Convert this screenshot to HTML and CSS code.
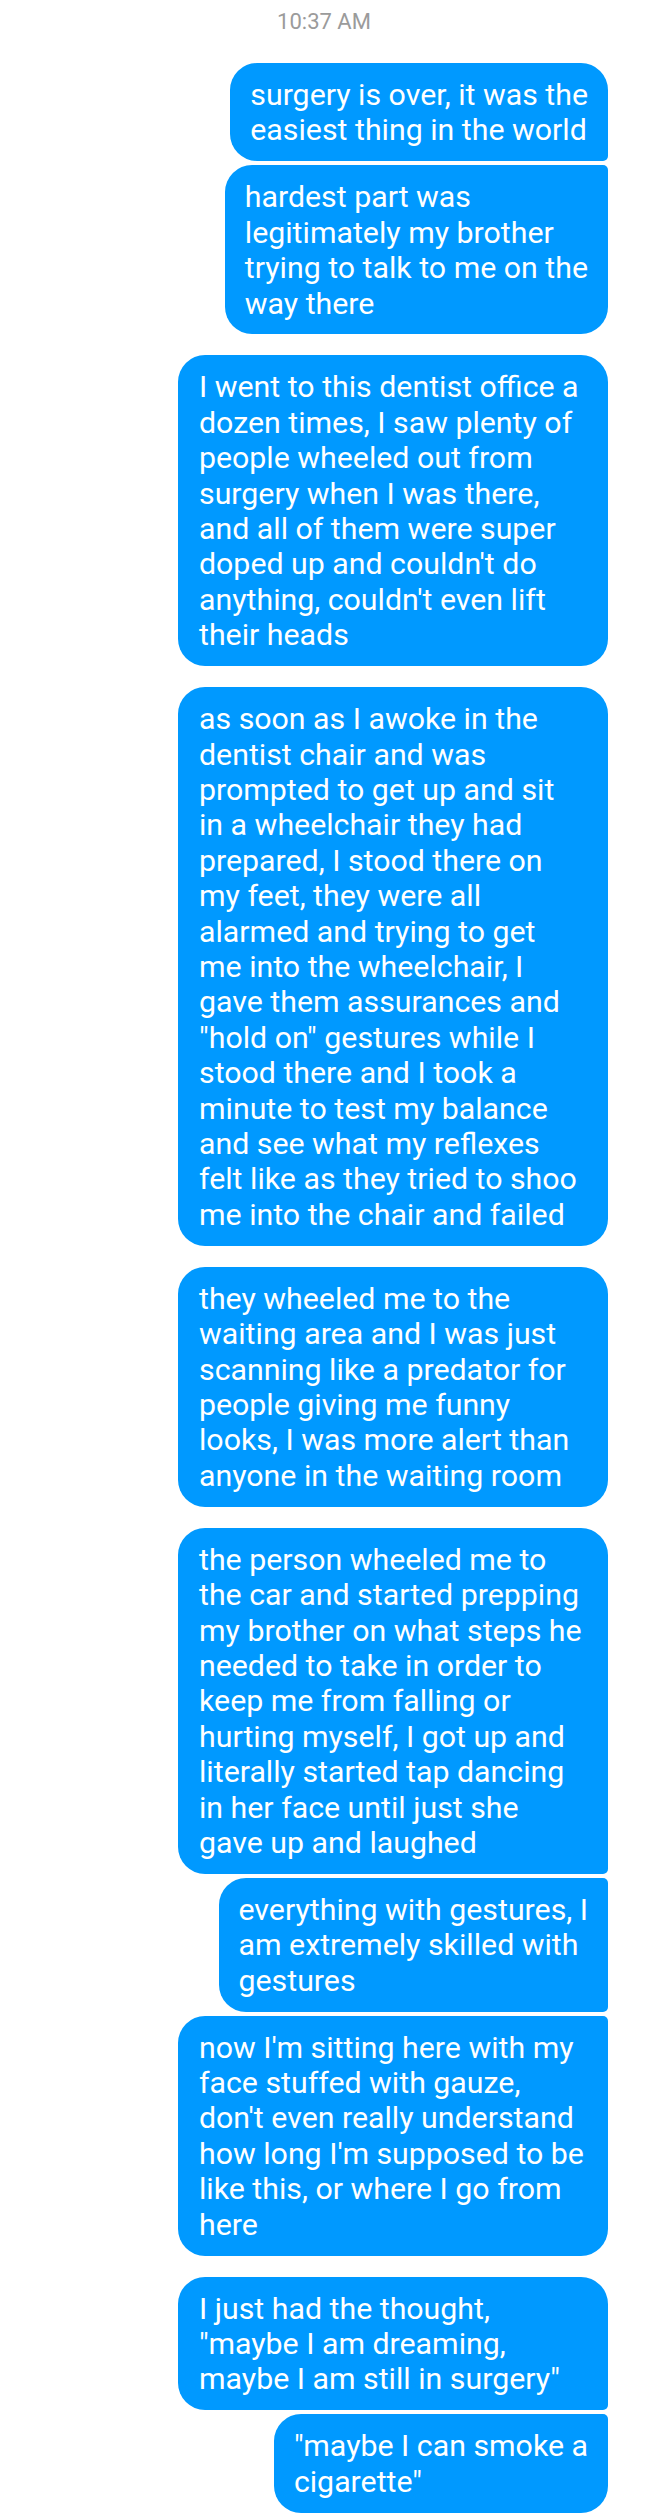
FILE: index.html
```html
<!DOCTYPE html>
<html lang="en">
<head>
<meta charset="utf-8">
<title>Messages</title>
<link rel="stylesheet" href="styles.css">
</head>
<body>
<main class="thread">
  <div class="time">10:37 AM</div>

  <section class="group">
    <p class="bubble first">surgery is over, it was the<br>easiest thing in the world</p>
    <p class="bubble last">hardest part was<br>legitimately my brother<br>trying to talk to me on the<br>way there</p>
  </section>

  <section class="group">
    <p class="bubble wide">I went to this dentist office a<br>dozen times, I saw plenty of<br>people wheeled out from<br>surgery when I was there,<br>and all of them were super<br>doped up and couldn't do<br>anything, couldn't even lift<br>their heads</p>
  </section>

  <section class="group">
    <p class="bubble wide">as soon as I awoke in the<br>dentist chair and was<br>prompted to get up and sit<br>in a wheelchair they had<br>prepared, I stood there on<br>my feet, they were all<br>alarmed and trying to get<br>me into the wheelchair, I<br>gave them assurances and<br>"hold on" gestures while I<br>stood there and I took a<br>minute to test my balance<br>and see what my reflexes<br>felt like as they tried to shoo<br>me into the chair and failed</p>
  </section>

  <section class="group">
    <p class="bubble wide">they wheeled me to the<br>waiting area and I was just<br>scanning like a predator for<br>people giving me funny<br>looks, I was more alert than<br>anyone in the waiting room</p>
  </section>

  <section class="group">
    <p class="bubble wide first">the person wheeled me to<br>the car and started prepping<br>my brother on what steps he<br>needed to take in order to<br>keep me from falling or<br>hurting myself, I got up and<br>literally started tap dancing<br>in her face until just she<br>gave up and laughed</p>
    <p class="bubble middle">everything with gestures, I<br>am extremely skilled with<br>gestures</p>
    <p class="bubble wide last">now I'm sitting here with my<br>face stuffed with gauze,<br>don't even really understand<br>how long I'm supposed to be<br>like this, or where I go from<br>here</p>
  </section>

  <section class="group">
    <p class="bubble wide first">I just had the thought,<br>"maybe I am dreaming,<br>maybe I am still in surgery"</p>
    <p class="bubble last">"maybe I can smoke a<br>cigarette"</p>
  </section>
</main>
</body>
</html>
```

FILE: styles.css
```css
* {
  box-sizing: border-box;
}

html, body {
  margin: 0;
  padding: 0;
  background: #ffffff;
}

body {
  width: 648px;
  min-height: 2520px;
  font-family: Roboto, "Noto Sans", "Liberation Sans", sans-serif;
}

.thread {
  display: flex;
  flex-direction: column;
  align-items: stretch;
  padding: 9px 40px 0 0;
  gap: 21px;
}

.time {
  padding-left: 40px;
  text-align: center;
  font-size: 22px;
  line-height: 26px;
  color: #9b9b9b;
  margin-bottom: 7px;
}

.group {
  display: flex;
  flex-direction: column;
  align-items: flex-end;
  gap: 4px;
}

.bubble {
  margin: 0;
  padding: 14px 20px 13.5px 20px;
  background: #0099ff;
  color: #ffffff;
  font-size: 30.3px;
  line-height: 35.4px;
  white-space: nowrap;
  border-radius: 27px;
}

.bubble.wide {
  width: 430px;
  padding-left: 21px;
}

.bubble.first {
  border-bottom-right-radius: 5px;
}

.bubble.middle {
  border-top-right-radius: 5px;
  border-bottom-right-radius: 5px;
}

.bubble.last {
  border-top-right-radius: 5px;
}
```
